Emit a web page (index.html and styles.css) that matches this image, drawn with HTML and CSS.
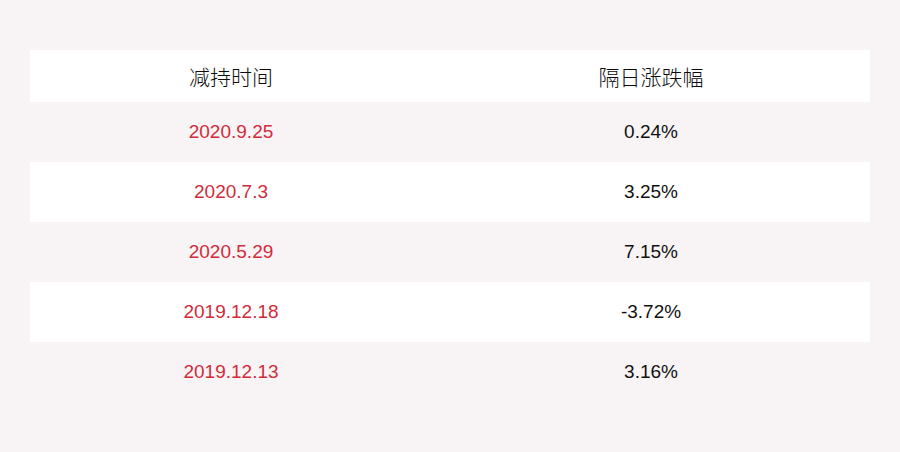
FILE: index.html
```html
<!DOCTYPE html>
<html lang="zh">
<head>
<meta charset="utf-8">
<link rel="stylesheet" href="styles.css">
</head>
<body>
<div class="table">
  <div class="row head"><div class="cell">减持时间</div><div class="cell">隔日涨跌幅</div></div>
  <div class="row"><div class="cell date">2020.9.25</div><div class="cell">0.24%</div></div>
  <div class="row alt"><div class="cell date">2020.7.3</div><div class="cell">3.25%</div></div>
  <div class="row"><div class="cell date">2020.5.29</div><div class="cell">7.15%</div></div>
  <div class="row alt"><div class="cell date">2019.12.18</div><div class="cell">-3.72%</div></div>
  <div class="row"><div class="cell date">2019.12.13</div><div class="cell">3.16%</div></div>
</div>
</body>
</html>
```
FILE: styles.css
```css
html, body {
  margin: 0;
  padding: 0;
  background: #f8f4f5;
  width: 900px;
  height: 452px;
  overflow: hidden;
}
body {
  font-family: "Liberation Sans", Arial, "Noto Sans CJK SC", sans-serif;
  font-size: 19px;
  color: #111;
}
.table {
  margin: 50px 30px 0 30px;
  display: flex;
  flex-direction: column;
}
.row {
  display: grid;
  grid-template-columns: 1fr 1fr;
  height: 60px;
  align-items: center;
}
.row.head {
  height: 52px;
  background: #fff;
  color: #0c0c0c;
}
.row.alt {
  background: #fff;
}
.cell {
  text-align: center;
  padding-right: 18px;
}
.head .cell {
  font-family: "Noto Sans CJK SC", sans-serif;
  font-size: 21px;
  font-weight: 300;
}
.date {
  color: #d12b3b;
}
```
